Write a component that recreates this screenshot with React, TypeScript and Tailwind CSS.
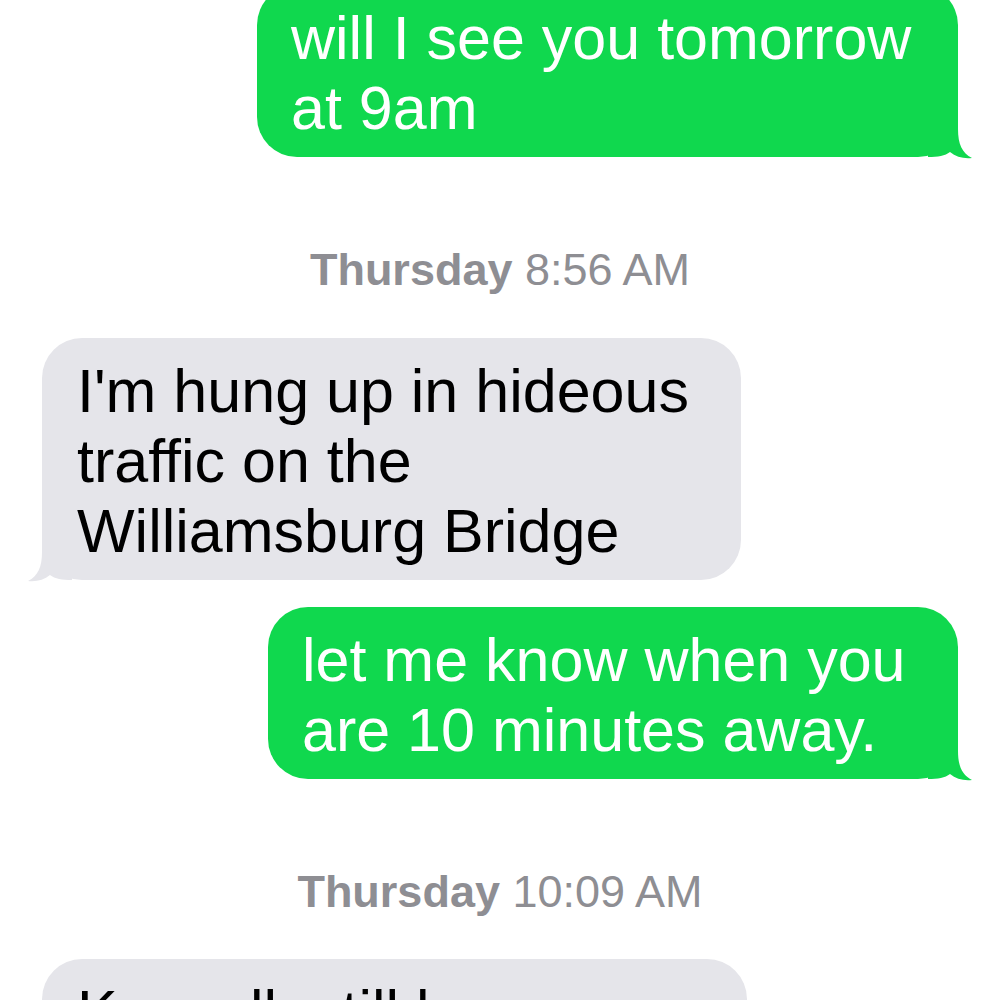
import React from "react";

type BubbleProps = {
  lines: string[];
  className?: string;
  tail?: boolean;
};

// iOS style bubble tail, drawn for the right side and mirrored for the left
const Tail = ({ side, fill }: { side: "left" | "right"; fill: string }) => (
  <svg
    viewBox="0 0 44 42"
    className={`absolute bottom-[-2px] h-[42px] w-[44px] ${
      side === "right" ? "right-[-14px]" : "left-[-14px] -scale-x-100"
    } ${fill}`}
  >
    <path d="M0 0H30V12C30 27 34 36 44 41C36 42 28 40 22 35C17 39 10 40 0 40Z" />
  </svg>
);

const Sent = ({ lines, className = "", tail = true }: BubbleProps) => (
  <div
    className={`relative self-end rounded-[40px] bg-[#10d84e] pt-[18px] pb-[14px] pl-[34px] pr-[20px] text-[61px] leading-[70px] text-white ${className}`}
  >
    {lines.map((l, i) => (
      <div key={i} className="whitespace-nowrap">
        {l}
      </div>
    ))}
    {tail && <Tail side="right" fill="fill-[#10d84e]" />}
  </div>
);

const Received = ({ lines, className = "", tail = true }: BubbleProps) => (
  <div
    className={`relative self-start rounded-[40px] bg-[#e5e5ea] pt-[18px] pb-[14px] pl-[35px] pr-[20px] text-[61px] leading-[70px] text-black ${className}`}
  >
    {lines.map((l, i) => (
      <div key={i} className="whitespace-nowrap">
        {l}
      </div>
    ))}
    {tail && <Tail side="left" fill="fill-[#e5e5ea]" />}
  </div>
);

const Stamp = ({ day, time, className = "" }: { day: string; time: string; className?: string }) => (
  <div className={`text-center text-[45px] leading-[54px] text-[#8e8e93] ${className}`}>
    <span className="font-semibold">{day}</span> {time}
  </div>
);

export default function App() {
  return (
    <div className="h-[1000px] w-[1000px] overflow-hidden bg-white font-['Liberation_Sans',Arial,sans-serif]">
      <div className="flex flex-col px-[42px]">
        <Sent className="mt-[-15px] w-[701px]" lines={["will I see you tomorrow", "at 9am"]} />
        <Stamp className="mt-[86px]" day="Thursday" time="8:56 AM" />
        <Received
          className="mt-[41px] w-[699px]"
          lines={["I'm hung up in hideous", "traffic on the", "Williamsburg Bridge"]}
        />
        <Sent className="mt-[27px] w-[690px]" lines={["let me know when you", "are 10 minutes away."]} />
        <Stamp className="mt-[86px]" day="Thursday" time="10:09 AM" />
        <Received className="mt-[40px] w-[705px]" tail={false} lines={["K so all, still be near", "soon"]} />
      </div>
    </div>
  );
}
